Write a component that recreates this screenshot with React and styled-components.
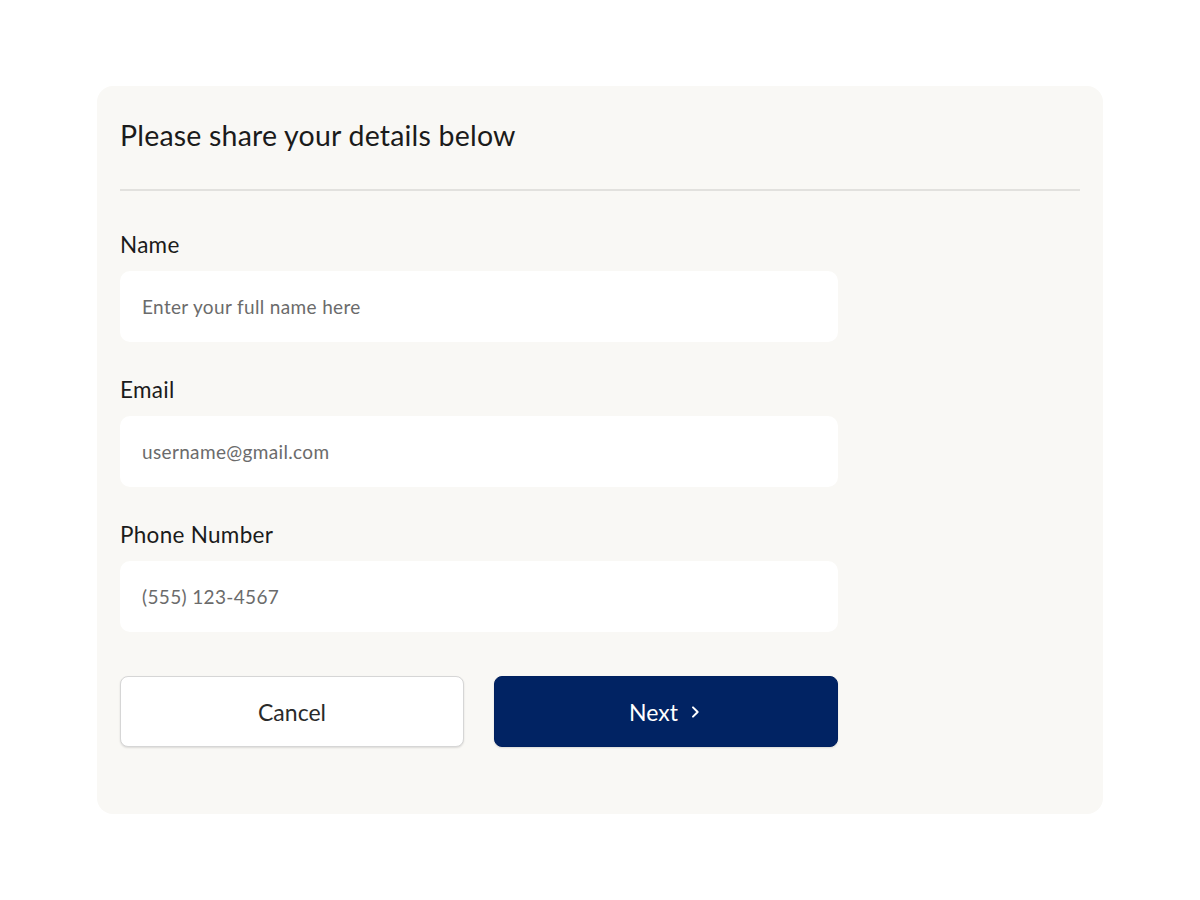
import React from 'react';
import styled, { createGlobalStyle } from 'styled-components';

const GlobalStyle = createGlobalStyle`
  body {
    margin: 0;
    background: #ffffff;
    font-family: Lato, "Noto Sans", sans-serif;
  }
`;

const fields = [
  { label: 'Name', placeholder: 'Enter your full name here', type: 'text' },
  { label: 'Email', placeholder: 'username@gmail.com', type: 'email' },
  { label: 'Phone Number', placeholder: '(555) 123-4567', type: 'tel' },
];

function App() {
  return (
    <Page>
      <GlobalStyle />
      <Card>
        <Title>Please share your details below</Title>
        <Divider />
        <Form onSubmit={e => e.preventDefault()}>
          {fields.map(field => (
            <Field key={field.label}>
              <Label>{field.label}</Label>
              <Input type={field.type} placeholder={field.placeholder} />
            </Field>
          ))}
          <Actions>
            <Button type="button">Cancel</Button>
            <Button type="submit" primary>
              Next
              <svg width="16" height="16" viewBox="0 0 24 24" fill="none" stroke="currentColor" strokeWidth="3" strokeLinecap="round" strokeLinejoin="round">
                <path d="M9 5l7 7-7 7" />
              </svg>
            </Button>
          </Actions>
        </Form>
      </Card>
    </Page>
  );
}

const Page = styled.div`
  min-height: 100vh;
  display: flex;
  align-items: center;
  justify-content: center;
`;
const Card = styled.div`
  width: 1006px;
  box-sizing: border-box;
  padding: 22px 23px 67px;
  background: #f9f8f5;
  border-radius: 16px;
`;
const Title = styled.h1`
  margin: 0;
  height: 54px;
  font-size: 28.5px;
  line-height: 54px;
  font-weight: 400;
  letter-spacing: 0.2px;
  color: #1b1b1b;
`;
const Divider = styled.hr`
  margin: 27px 0 0;
  border: none;
  height: 2px;
  background: #e2e1de;
`;
const Form = styled.form`
  width: 718px;
  padding-top: 42px;
  display: flex;
  flex-direction: column;
  gap: 36px;
`;
const Field = styled.label`
  display: flex;
  flex-direction: column;
  gap: 14px;
`;
const Label = styled.span`
  font-size: 22.5px;
  line-height: 24px;
  letter-spacing: 0.3px;
  color: #1b1b1b;
`;
const Input = styled.input`
  height: 71px;
  box-sizing: border-box;
  padding: 0 22px;
  border: none;
  border-radius: 10px;
  background: #ffffff;
  font-family: Lato, "Noto Sans", sans-serif;
  font-size: 19px;
  letter-spacing: 0.35px;
  color: #1b1b1b;
  outline: none;
  &::placeholder {
    color: #6b6b6b;
  }
`;
const Actions = styled.div`
  display: grid;
  grid-template-columns: 1fr 1fr;
  gap: 30px;
  margin-top: 8px;
`;
const Button = styled.button`
  height: 71px;
  display: flex;
  align-items: center;
  justify-content: center;
  gap: 9px;
  border-radius: 8px;
  font-family: Lato, "Noto Sans", sans-serif;
  font-size: 23px;
  cursor: pointer;
  border: 1px solid ${p => (p.primary ? '#00205f' : '#d6d6d6')};
  background: ${p => (p.primary ? '#012363' : '#ffffff')};
  color: ${p => (p.primary ? '#ffffff' : '#2a2a2a')};
  box-shadow: 0 1px 2px rgba(0, 0, 0, 0.12);
`;

export default App;
